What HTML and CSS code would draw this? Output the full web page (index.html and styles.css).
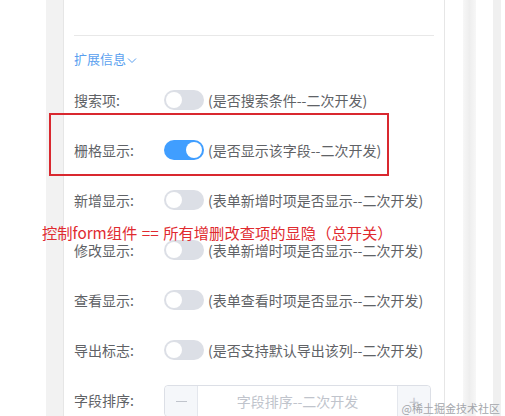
FILE: index.html
```html
<!DOCTYPE html>
<html>
<head>
<meta charset="utf-8">
<link rel="stylesheet" href="styles.css">
</head>
<body>
<div class="page">
  <div class="gap-white-l"></div>
  <div class="gap-grey-l"></div>
  <div class="card">
    <div class="card-top"></div>
    <div class="section-title">扩展信息<svg class="chev" width="10" height="7" viewBox="0 0 10 7"><path d="M1 1.5 L5 5.5 L9 1.5" fill="none" stroke="#5a9fef" stroke-width="1"/></svg></div>
    <div class="rows">
      <div class="row"><span class="label">搜索项:</span><span class="switch"><span class="knob"></span></span><span class="desc">(是否搜索条件--二次开发)</span></div>
      <div class="row"><span class="label">栅格显示:</span><span class="switch on"><span class="knob"></span></span><span class="desc">(是否显示该字段--二次开发)</span></div>
      <div class="row"><span class="label">新增显示:</span><span class="switch"><span class="knob"></span></span><span class="desc">(表单新增时项是否显示--二次开发)</span></div>
      <div class="row"><span class="label">修改显示:</span><span class="switch"><span class="knob"></span></span><span class="desc">(表单新增时项是否显示--二次开发)</span></div>
      <div class="row"><span class="label">查看显示:</span><span class="switch"><span class="knob"></span></span><span class="desc">(表单查看时项是否显示--二次开发)</span></div>
      <div class="row"><span class="label">导出标志:</span><span class="switch"><span class="knob"></span></span><span class="desc">(是否支持默认导出该列--二次开发)</span></div>
      <div class="row"><span class="label">字段排序:</span>
        <div class="num-input">
          <span class="num-btn minus"><span class="minus-bar"></span></span>
          <span class="num-field">字段排序--二次开发</span>
          <span class="num-btn plus">+</span>
        </div>
      </div>
    </div>
  </div>
  <div class="gap-white-r1"></div>
  <div class="gap-grey-r1"></div>
  <div class="gap-white-r2"></div>
  <div class="gap-grey-r2"></div>
  <div class="gap-white-r3"></div>
</div>
<div class="red-box"></div>
<div class="note">控制form组件 == 所有增删改查项的显隐（总开关）</div>
<div class="watermark">@稀土掘金技术社区</div>
</body>
</html>
```

FILE: styles.css
```css
html, body {
  margin: 0;
  padding: 0;
  background: #ffffff;
  overflow: hidden;
}
body {
  width: 505px;
  height: 416px;
  position: relative;
  font-family: "Noto Sans CJK SC", "Noto Sans", sans-serif;
}
.page {
  display: flex;
  height: 416px;
}
.gap-white-l { width: 46px; background: #ffffff; }
.gap-grey-l { width: 17px; background: #f2f2f2; }
.card {
  width: 380px;
  background: #ffffff;
  border-left: 1px solid #e6e6e6;
  border-right: 1px solid #e6e6e6;
  display: flex;
  flex-direction: column;
}
.card-top {
  height: 36px;
  margin: 0 10px;
  border-bottom: 1px solid #e8e8e8;
}
.section-title {
  margin: 13px 0 0 10px;
  height: 20px;
  line-height: 20px;
  font-size: 13px;
  color: #5a9fef;
  display: flex;
  align-items: center;
}
.chev { margin-left: 1px; margin-top: 2px; }
.rows {
  margin-top: 15px;
  display: flex;
  flex-direction: column;
  gap: 18px;
  padding-left: 10px;
}
.row {
  height: 32px;
  display: flex;
  align-items: center;
  font-size: 14px;
  line-height: 16px;
  color: #606266;
}
.label {
  width: 90px;
  flex: none;
}
.switch {
  width: 40px;
  height: 20px;
  border-radius: 10px;
  background: #dcdfe6;
  position: relative;
  flex: none;
}
.switch .knob {
  position: absolute;
  top: 2px;
  left: 2px;
  width: 16px;
  height: 16px;
  border-radius: 50%;
  background: #ffffff;
}
.switch.on { background: #409eff; }
.switch.on .knob { left: 22px; }
.desc {
  margin-left: 4px;
  white-space: nowrap;
}
.num-input {
  width: 267px;
  height: 32px;
  border: 1px solid #dcdfe6;
  border-radius: 4px;
  display: flex;
  margin-top: 2px;
  box-sizing: border-box;
  flex: none;
}
.num-btn {
  width: 32px;
  background: #f5f7fa;
  display: flex;
  align-items: center;
  justify-content: center;
  color: #c8ccd3;
  font-size: 18px;
}
.num-btn.minus { border-right: 1px solid #e4e7ed; border-radius: 4px 0 0 4px; }
.num-btn.plus { border-left: 1px solid #e4e7ed; border-radius: 0 4px 4px 0; }
.minus-bar { width: 11px; height: 1px; background: #c0c4cc; }
.num-field {
  flex: 1;
  text-align: center;
  line-height: 30px;
  color: #c0c4cc;
  font-size: 14px;
}
.gap-white-r1 { width: 18px; }
.gap-grey-r1 { width: 13px; background: linear-gradient(90deg, #f7f7f7, #eeeeee 50%, #f7f7f7); }
.gap-white-r2 { width: 17px; }
.gap-grey-r2 { width: 8px; background: #f0f0f0; }
.gap-white-r3 { flex: 1; }
.red-box {
  position: absolute;
  left: 49px;
  top: 113px;
  width: 336px;
  height: 59px;
  border: 2px solid #d9282f;
}
.note {
  position: absolute;
  left: 42px;
  top: 223px;
  font-size: 15.3px;
  line-height: 18px;
  color: #e02a2f;
  white-space: nowrap;
  word-spacing: 1px;
}
.watermark {
  position: absolute;
  right: 5px;
  top: 400px;
  font-size: 11px;
  line-height: 16px;
  color: #a3a6ab;
  white-space: nowrap;
}
```
